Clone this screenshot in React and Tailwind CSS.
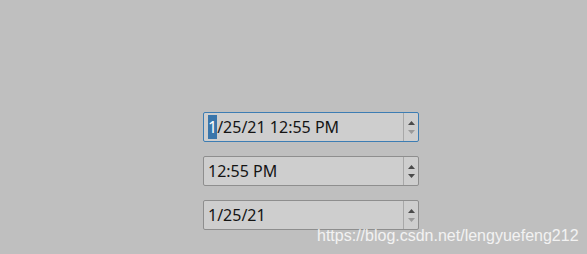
import React from "react";

function Arrows({ downDisabled }) {
  return (
    <div className="flex w-[15px] flex-col items-center justify-center gap-[5px] border-l border-[#a8a8a8]">
      <svg width="7" height="4" viewBox="0 0 7 4">
        <path d="M3.5 0 L7 4 L0 4 Z" fill="#4a4a4a" />
      </svg>
      <svg width="7" height="4" viewBox="0 0 7 4">
        <path d="M0 0 L7 0 L3.5 4 Z" fill={downDisabled ? "#9a9a9a" : "#4a4a4a"} />
      </svg>
    </div>
  );
}

function Field({ children, focused, downDisabled }) {
  return (
    <div
      className={`flex h-[30px] w-[216px] rounded-[2px] border bg-[#cecece] ${
        focused ? "border-[#3d7db3]" : "border-[#8e8e8e]"
      }`}
    >
      <div className="flex flex-1 items-center pl-[4px] text-[16px] text-[#141414]">{children}</div>
      <Arrows downDisabled={downDisabled} />
    </div>
  );
}

export default function App() {
  return (
    <div
      className="relative h-[254px] w-[587px] overflow-hidden bg-[#bfbfbf]"
      style={{ fontFamily: '"Noto Sans", sans-serif' }}
    >
      <div className="flex flex-col gap-[14px] pl-[203px] pt-[112px]">
        <Field focused downDisabled>
          <span className="bg-[#3a76ab] text-white">1</span>/25/21 12:55 PM
        </Field>
        <Field>12:55 PM</Field>
        <Field downDisabled>1/25/21</Field>
      </div>
      <div
        className="absolute left-[317px] top-[224px] text-[16px] text-white/80"
        style={{ fontFamily: '"Liberation Sans", sans-serif' }}
      >
        https://blog.csdn.net/lengyuefeng212
      </div>
    </div>
  );
}
